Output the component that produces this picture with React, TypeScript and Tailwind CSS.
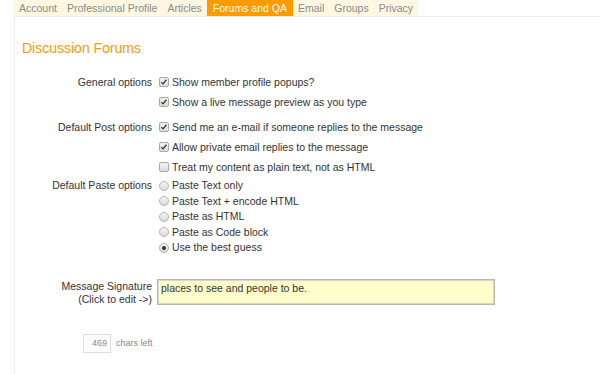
import type { ReactNode } from "react";

const tabs = ["Account", "Professional Profile", "Articles", "Forums and QA", "Email", "Groups", "Privacy"];

const Check = ({ checked }: { checked: boolean }) => (
  <span className="relative inline-block w-[10px] h-[10px] rounded-[2px] border border-[#a8a8a8] bg-gradient-to-b from-[#f4f4f4] to-[#dcdcdc] shrink-0">
    {checked && (
      <svg viewBox="0 0 10 10" className="absolute inset-0 w-[8px] h-[8px]">
        <path d="M1.6 5.2 L3.8 7.3 L8 2.2" fill="none" stroke="#333" strokeWidth="1.6" />
      </svg>
    )}
  </span>
);

const Radio = ({ checked }: { checked: boolean }) => (
  <span className="flex items-center justify-center w-[10px] h-[10px] rounded-full border border-[#b4b4b4] bg-gradient-to-b from-[#f4f4f4] to-[#dadada] shrink-0">
    {checked && <span className="block w-[4px] h-[4px] rounded-full bg-[#333]" />}
  </span>
);

const Row = ({ label, children, className = "" }: { label?: string; children: ReactNode; className?: string }) => (
  <div className={`flex items-center ${className}`}>
    <div className="w-[142px] pr-[5px] text-right shrink-0">{label}</div>
    <div className="flex items-center gap-[3px] pl-[2px]">{children}</div>
  </div>
);

export default function App() {
  return (
    <div className="w-[600px] h-[374px] bg-white overflow-hidden text-[10.5px] leading-[13px] text-[#333] font-['Liberation_Sans',Arial,sans-serif]">
      <div className="flex">
        <div className="ml-[14px] flex h-[16px] items-stretch bg-[#fff7e1]">
          {tabs.map((t) => (
            <div
              key={t}
              className={`flex items-center text-[10.5px] ${
                t === "Forums and QA" ? "bg-[#ff9a00] text-white px-[6px]" : "text-[#8a8a8a] px-[5px]"
              }`}
            >
              {t}
            </div>
          ))}
        </div>
      </div>

      <div className="ml-[14px] h-[358px] border-t border-l border-[#eeeeee]">
        <h2 className="ml-[7px] mt-[23px] text-[14px] leading-[16px] text-[#ff9a00]">Discussion Forums</h2>

        <div className="mt-[16px]">
          <Row label="General options" className="h-[20px]">
            <Check checked />
            <span>Show member profile popups?</span>
          </Row>
          <Row className="h-[20px]">
            <Check checked />
            <span>Show a live message preview as you type</span>
          </Row>

          <Row label="Default Post options" className="h-[20px] mt-[5px]">
            <Check checked />
            <span>Send me an e-mail if someone replies to the message</span>
          </Row>
          <Row className="h-[20px]">
            <Check checked />
            <span>Allow private email replies to the message</span>
          </Row>
          <Row className="h-[20px]">
            <Check checked={false} />
            <span>Treat my content as plain text, not as HTML</span>
          </Row>

          <Row label="Default Paste options" className="h-[15.5px] mt-[1px]">
            <Radio checked={false} />
            <span>Paste Text only</span>
          </Row>
          <Row className="h-[15.5px]">
            <Radio checked={false} />
            <span>Paste Text + encode HTML</span>
          </Row>
          <Row className="h-[15.5px]">
            <Radio checked={false} />
            <span>Paste as HTML</span>
          </Row>
          <Row className="h-[15.5px]">
            <Radio checked={false} />
            <span>Paste as Code block</span>
          </Row>
          <Row className="h-[15.5px]">
            <Radio checked />
            <span>Use the best guess</span>
          </Row>

          <div className="flex items-start mt-[23px]">
            <div className="w-[142px] pr-[5px] pt-[1px] text-right shrink-0">
              Message Signature
              <br />
              (Click to edit -&gt;)
            </div>
            <div className="w-[338px] h-[26px] bg-[#ffffcc] border border-[#b5b5b5] px-[3px] pt-[2px] shadow-[inset_0_0_0_1px_#d8d8c0]">
              places to see and people to be.
            </div>
          </div>

          <div className="flex items-center mt-[28px] ml-[68px]">
            <div className="w-[28px] h-[19px] border border-[#dddddd] text-right pr-[3px] text-[9px] leading-[17px] text-[#888]">
              469
            </div>
            <span className="ml-[5px] text-[9px] text-[#888]">chars left</span>
          </div>
        </div>
      </div>
    </div>
  );
}
